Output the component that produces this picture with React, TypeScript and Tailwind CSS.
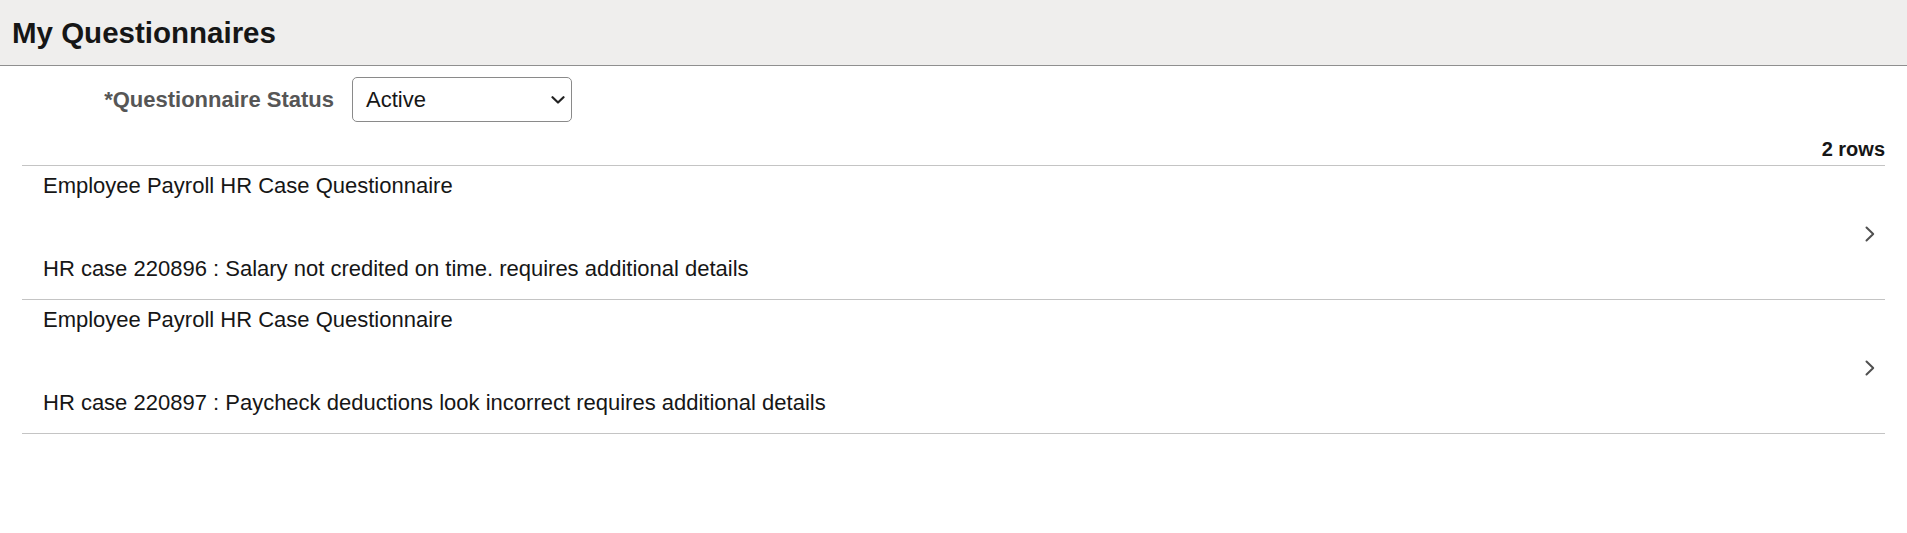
import React from 'react';

interface QuestionnaireRow {
  title: string;
  detail: string;
}

const ROWS: QuestionnaireRow[] = [
  {
    title: 'Employee Payroll HR Case Questionnaire',
    detail: 'HR case 220896 : Salary not credited on time. requires additional details',
  },
  {
    title: 'Employee Payroll HR Case Questionnaire',
    detail: 'HR case 220897 : Paycheck deductions look incorrect requires additional details',
  },
];

function ChevronRight() {
  return (
    <svg width="10" height="16" viewBox="0 0 10 16" fill="none">
      <path d="M1.5 1.5 L8.2 8 L1.5 14.5" stroke="#505050" strokeWidth="2" strokeLinecap="round" strokeLinejoin="round" />
    </svg>
  );
}

function ChevronDown() {
  return (
    <svg width="14" height="8" viewBox="0 0 14 8" fill="none">
      <path d="M1.5 1.2 L7 6.5 L12.5 1.2" stroke="#222222" strokeWidth="2.2" strokeLinecap="round" strokeLinejoin="round" />
    </svg>
  );
}

export default function App() {
  return (
    <div className="w-[1907px] h-[533px] bg-white font-['Liberation_Sans',Arial,sans-serif]">
      {/* Page header */}
      <header className="h-[66px] flex items-center px-[12px] bg-[#efeeed] border-b border-[#8f8f8f]">
        <h1 className="text-[29.5px] font-bold text-[#161616] leading-none">My Questionnaires</h1>
      </header>

      {/* Status filter */}
      <div className="flex items-center mt-[11px]">
        <label className="w-[334px] text-right text-[22px] font-bold text-[#565656] leading-[25px]">
          *Questionnaire Status
        </label>
        <div className="ml-[18px] w-[220px] h-[45px] flex items-center justify-between pl-[13px] pr-[6px] border border-[#8a8a8a] rounded-[5px] bg-white">
          <span className="text-[22px] text-[#161616] leading-[25px]">Active</span>
          <ChevronDown />
        </div>
      </div>

      {/* List */}
      <div className="mx-[22px] mt-[16px]">
        <div className="text-right text-[20px] font-bold text-[#161616] leading-[23px] pb-[4px]">2 rows</div>
        <div className="border-t border-[#c4c4c4]">
          {ROWS.map((row, i) => (
            <div key={i} className="flex items-center border-b border-[#c4c4c4]">
              <div className="flex-1 pl-[21px] pt-[7px] pb-[18px] text-[22px] text-[#161616] leading-[25px]">
                <div>{row.title}</div>
                <div className="mt-[58px]">{row.detail}</div>
              </div>
              <div className="pr-[10px] mt-[3px]">
                <ChevronRight />
              </div>
            </div>
          ))}
        </div>
      </div>
    </div>
  );
}
